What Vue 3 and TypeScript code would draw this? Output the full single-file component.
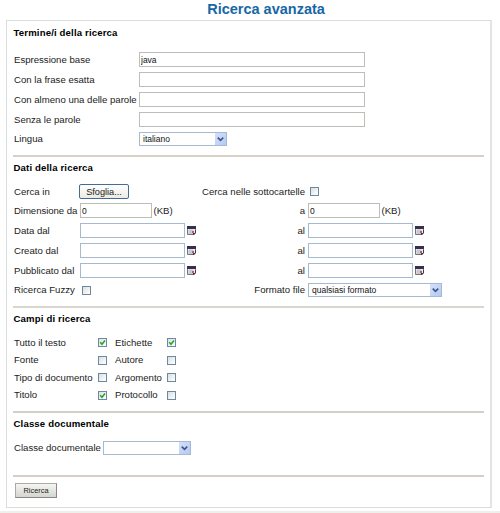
<script setup lang="ts">
import { reactive } from 'vue'

interface TextField { label: string; value: string }
interface DateRange { label: string; from: string; to: string }
interface CheckField { label: string; checked: boolean }

const terms = reactive<TextField[]>([
  { label: 'Espressione base', value: 'java' },
  { label: 'Con la frase esatta', value: '' },
  { label: 'Con almeno una delle parole', value: '' },
  { label: 'Senza le parole', value: '' },
])
const dates = reactive<DateRange[]>([
  { label: 'Data dal', from: '', to: '' },
  { label: 'Creato dal', from: '', to: '' },
  { label: 'Pubblicato dal', from: '', to: '' },
])
const fields = reactive<CheckField[]>([
  { label: 'Tutto il testo', checked: true },
  { label: 'Etichette', checked: true },
  { label: 'Fonte', checked: false },
  { label: 'Autore', checked: false },
  { label: 'Tipo di documento', checked: false },
  { label: 'Argomento', checked: false },
  { label: 'Titolo', checked: true },
  { label: 'Protocollo', checked: false },
])
const form = reactive({ subfolders: false, fuzzy: false, minSize: '0', maxSize: '0' })
</script>

<template>
  <div class="page">
    <h1>Ricerca avanzata</h1>
    <form class="panel" @submit.prevent>
      <section class="terms">
        <h2>Termine/i della ricerca</h2>
        <div class="grid">
          <template v-for="t in terms" :key="t.label">
            <span>{{ t.label }}</span>
            <input v-model="t.value" type="text" class="text long">
          </template>
          <span>Lingua</span>
          <div class="select language">
            <span>italiano</span>
            <i><svg viewBox="0 0 12 12"><path d="M3 4.5 6 7.5 9 4.5" /></svg></i>
          </div>
        </div>
      </section>

      <section class="data">
        <h2>Dati della ricerca</h2>
        <div class="grid">
          <span>Cerca in</span>
          <div class="cell"><button type="button" class="browse">Sfoglia...</button></div>
          <span class="right">Cerca nelle sottocartelle</span>
          <div class="cell"><input v-model="form.subfolders" type="checkbox" class="inset"></div>

          <span class="tight">Dimensione da</span>
          <div class="cell"><input v-model="form.minSize" type="text" class="text size"><span class="unit">(KB)</span></div>
          <span class="right">a</span>
          <div class="cell"><input v-model="form.maxSize" type="text" class="text size"><span class="unit">(KB)</span></div>

          <template v-for="d in dates" :key="d.label">
            <span>{{ d.label }}</span>
            <div class="cell">
              <input v-model="d.from" type="text" class="text date">
              <svg class="calendar" viewBox="0 0 9 9"><path class="sheet" d="M.5.5h8v6l-2 2h-6z" /><path class="bar" d="M0 0h9v3H0z" /><path class="lines" d="M1 5h6M1 7h5M3 3v5M5 3v5" /><path class="mark" d="M5 5h2v2H5z" /><path class="fold" d="M9 4v3L7 9H6V7h2V4z" /></svg>
            </div>
            <span class="right">al</span>
            <div class="cell">
              <input v-model="d.to" type="text" class="text date">
              <svg class="calendar" viewBox="0 0 9 9"><path class="sheet" d="M.5.5h8v6l-2 2h-6z" /><path class="bar" d="M0 0h9v3H0z" /><path class="lines" d="M1 5h6M1 7h5M3 3v5M5 3v5" /><path class="mark" d="M5 5h2v2H5z" /><path class="fold" d="M9 4v3L7 9H6V7h2V4z" /></svg>
            </div>
          </template>

          <span>Ricerca Fuzzy</span>
          <div class="cell"><input v-model="form.fuzzy" type="checkbox" class="inset"></div>
          <span class="right">Formato file</span>
          <div class="select format">
            <span>qualsiasi formato</span>
            <i><svg viewBox="0 0 12 12"><path d="M3 4.5 6 7.5 9 4.5" /></svg></i>
          </div>
        </div>
      </section>

      <section class="fields">
        <h2>Campi di ricerca</h2>
        <div class="grid">
          <template v-for="f in fields" :key="f.label">
            <span>{{ f.label }}</span>
            <label class="check">
              <input v-model="f.checked" type="checkbox">
              <svg v-if="f.checked" viewBox="0 0 9 9"><path d="M2.2 4.2 4 6.2 7 2.6" /></svg>
            </label>
          </template>
        </div>
      </section>

      <section class="class">
        <h2>Classe documentale</h2>
        <div class="grid">
          <span>Classe documentale</span>
          <div class="select document">
            <span></span>
            <i><svg viewBox="0 0 12 12"><path d="M3 4.5 6 7.5 9 4.5" /></svg></i>
          </div>
        </div>
      </section>

      <footer><button type="submit" class="submit">Ricerca</button></footer>
    </form>
    <div class="rule"></div>
  </div>
</template>

<style>
body { margin: 0; background: #fff; }
</style>

<style scoped>
* { box-sizing: border-box; }
.page {
  height: 513px;
  overflow: hidden;
  font: 9.6px/12px "Liberation Sans", Arial, sans-serif;
  color: #222;
  white-space: nowrap;
}
h1 {
  height: 20px;
  margin: 0 0 0 32px;
  font-size: 14.5px;
  line-height: 19px;
  text-align: center;
  color: #1767a6;
}
.panel {
  width: 486px;
  height: 488px;
  margin-left: 6px;
  padding: 0 6px;
  border: 1px solid #d9dddc;
  border-right: 2px solid #e3e5e4;
}
section { border-bottom: 2px solid #d8d0c4; }
h2 {
  margin: 0;
  padding-left: .5px;
  height: 24px;
  font-size: 9.6px;
  line-height: 24px;
  letter-spacing: .15px;
  color: #000;
}
.grid { display: grid; align-items: center; padding-left: 1px; }
.terms { height: 136px; }
.terms .grid {
  margin-top: 5px;
  grid-template-columns: 125px 1fr;
  grid-template-rows: repeat(4, 19px) 18px;
  row-gap: 1px;
}
.data { height: 151px; border-color: #d8d6cf; }
.data h2, .fields h2, .class h2 { height: 22px; line-height: 22px; }
.data .grid {
  margin-top: 3px;
  grid-template-columns: 66px 125px 103px 1fr;
  grid-template-rows: 19px 19px 21px 19px 21px 18px;
}
.right { justify-self: end; margin-right: 3px; }
.tight { letter-spacing: -.06px; }
.cell { display: flex; align-items: center; }
.fields { height: 105px; border-color: #d2d1c5; }
.fields .grid {
  margin-top: 4px;
  grid-template-columns: 84px 17px 52px 9px;
  grid-template-rows: repeat(4, 17.5px);
}
.class { height: 64px; border-color: #d8cdc4; }
.class .grid { margin-top: 4px; grid-template-columns: 89px 1fr; height: 18px; }
footer { padding: 6px 0 0 2px; }
input { margin: 0; appearance: none; border-radius: 0; outline: 0; }
.text {
  height: 15px;
  padding: 0 1px;
  border: 1px solid #bdbdb9;
  background: #fff;
  font: 8.5px/13px "Liberation Sans", Arial, sans-serif;
  color: #111;
}
.long { width: 226px; }
.size { width: 72px; }
.date { width: 105px; border-color: #a5b9cf; }
.unit { margin-left: 1.5px; }
.calendar { width: 9px; height: 9px; margin-left: 2px; }
.sheet { fill: #eee; stroke: #77727b; }
.bar { fill: #34304f; }
.lines { fill: none; stroke: #9c98a4; stroke-width: .5; }
.mark { fill: #c45c68; }
.fold { fill: #403743; }
input[type="checkbox"] {
  width: 9px;
  height: 9px;
  border: 1px solid #6989a6;
  background: linear-gradient(135deg, #dedfdc, #fff);
}
.inset { margin-left: 2px; }
.check { display: grid; width: 9px; height: 9px; }
.check > * { grid-area: 1 / 1; }
.check svg { width: 9px; height: 9px; fill: none; stroke: #28a52b; stroke-width: 1.6; pointer-events: none; }
.select {
  display: flex;
  justify-content: space-between;
  height: 14px;
  padding-left: 3px;
  border: 1px solid #a5b9cf;
  font-size: 8.5px;
  color: #111;
}
.select span { line-height: 13px; }
.select i { width: 11px; height: 12px; background: linear-gradient(135deg, #d5e0fb, #b4c9f4); }
.select svg { display: block; width: 11px; height: 12px; fill: none; stroke: #415682; stroke-width: 1.8; }
.language { width: 88px; }
.format { width: 134px; }
.document { width: 88px; }
button { padding: 0; color: #222; font-family: "Liberation Sans", Arial, sans-serif; }
.browse {
  width: 50px;
  height: 15px;
  margin-left: -1px;
  border: 1px solid #456c91;
  border-radius: 2px;
  background: linear-gradient(#fff, #ecebe4);
  font-size: 9.2px;
  line-height: 12px;
}
.submit {
  display: block;
  width: 42px;
  height: 15px;
  border: 1px solid #aaa9a5;
  border-right-color: #888;
  border-bottom-color: #888;
  background: linear-gradient(#f5f5f2, #d5d5d0);
  font-size: 7.4px;
  line-height: 12px;
}
.rule { height: 2px; margin-top: 3px; background: #eff0e9; }
</style>
